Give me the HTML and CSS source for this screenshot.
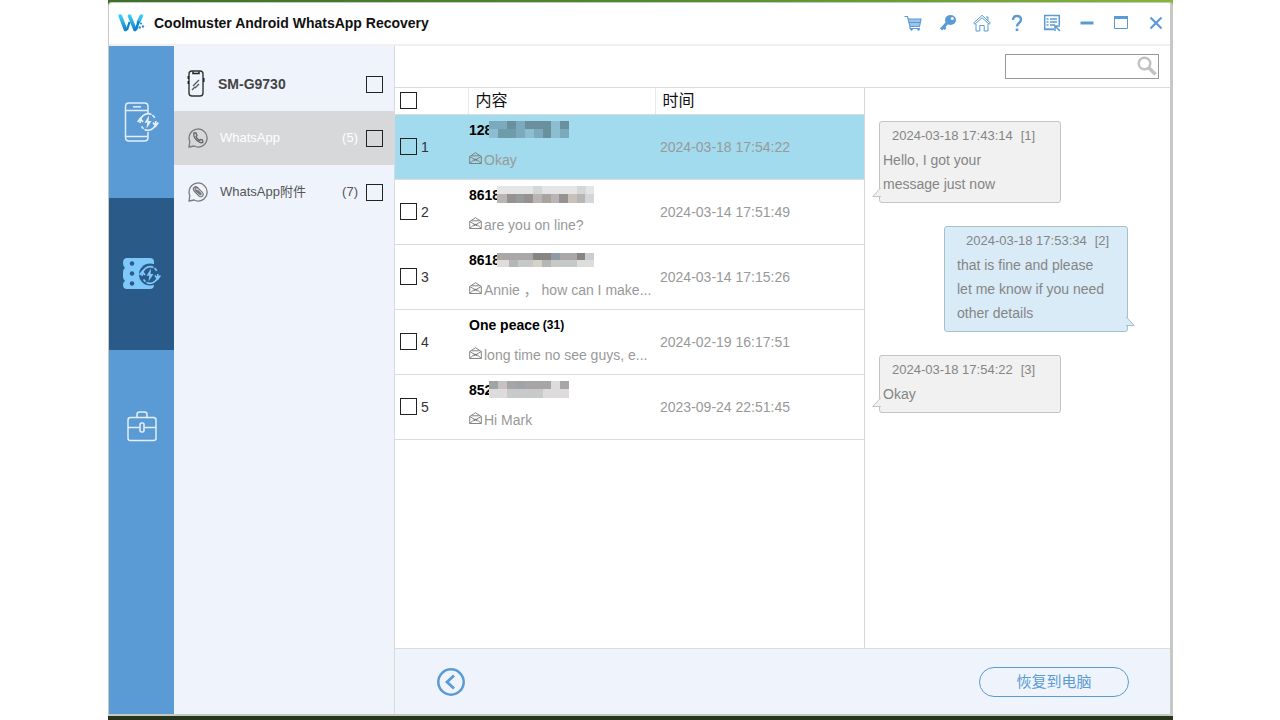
FILE: index.html
```html
<!DOCTYPE html>
<html lang="zh">
<head>
<meta charset="utf-8">
<title>Coolmuster Android WhatsApp Recovery</title>
<link rel="stylesheet" href="styles.css">
</head>
<body>
<svg class="defs" aria-hidden="true">
  <symbol id="mail" viewBox="0 0 13 12"><path d="M.7 4.500 6.500.7l5.800 3.800v7H.7zM.7 4.500 8.500 9M12.300 4.500 4.500 9M.7 11.500 4.500 8Q6.500 6.500 8.500 8l3.800 3.500M2.500 3.800h8" fill="none" stroke="#777" stroke-width=".9"/></symbol>
  <symbol id="bubble" viewBox="0 0 20 20"><path d="M1 19l.8-5.500A9 9 0 1 1 6 18z" fill="none" stroke="#777a7d" stroke-width="1.300" stroke-linejoin="round"/></symbol>
  <symbol id="cycle" viewBox="0 0 22 20"><path d="M3.300 11A8 8 0 0 1 14.500 2.500M18.700 9A8 8 0 0 1 7.500 17.500M.6 10 3.300 6.500 6 10M16 10.500l2.700 3.500 2.700-3.500M4.500 14.500l2 2.300M15.500 3 17.800 5.800" fill="none" stroke="currentColor" stroke-width="1.700"/><path d="M12 3.500 7.500 10.800h2.700L9.500 16.500l5-7.500h-2.900z" fill="currentColor"/></symbol>
</svg>
<div class="desktop">
<div class="window">
  <header class="titlebar">
    <svg class="logo" width="27" height="20" viewBox="0 0 27 20"><defs><linearGradient id="lg" x1="0" y1="0" x2="0" y2="20" gradientUnits="userSpaceOnUse"><stop offset="0" stop-color="#45dcfc"/><stop offset="1" stop-color="#0673c2"/></linearGradient></defs><g fill="none" stroke="url(#lg)" stroke-width="3.600" stroke-linecap="round"><path d="M2.300 3 7.500 16.500"/><path d="M11.500 3 17 16.500"/><path d="M23.300 3 20.500 9"/></g><path d="M20.500 8.500 18 17" stroke="#0c84cc" stroke-width="2.500"/><path d="M11.500 9 9 17" stroke="#0c84cc" stroke-width="2.200"/><g fill="#2a95d6"><circle cx="23" cy="10.500" r="1.100"/><circle cx="21.700" cy="14.500" r="1.300"/><circle cx="25" cy="13.500" r="1.200"/></g></svg>
    <h1 class="title">Coolmuster Android WhatsApp Recovery</h1>
    <div class="tools">
      <button class="tool" aria-label="Cart"><svg viewBox="0 0 18 18"><path d="M4.500 5H17L15.500 12H6z" fill="#9fc4e8"/><path d="M.5 2.500h3L6 12.500h9.500L17 5H4.500M5 8.500h11M6 12.500v2h10" fill="none" stroke="#5b9bd5" stroke-width="1.200"/><circle cx="7.500" cy="15.500" r="1.200" fill="#5b9bd5"/><circle cx="14.500" cy="15.500" r="1.200" fill="#5b9bd5"/></svg></button>
      <button class="tool" aria-label="Register"><svg viewBox="0 0 18 18"><path d="M9 8 2 15.500M4.500 13l2 2" stroke="#5b9bd5" stroke-width="3"/><ellipse cx="11.500" cy="6" rx="5.500" ry="5" fill="#5b9bd5"/><circle cx="13.300" cy="4.500" r="1.500" fill="#fff"/></svg></button>
      <button class="tool" aria-label="Home"><svg viewBox="0 0 18 18"><path d="M.7 9 9 1.300 17.300 9l-1.200 1.200L9 3.700 1.900 10.200zM3 10v7h3.800v-5.500h4.400V17H15v-7M13 3h2v3.500" fill="none" stroke="#5b9bd5"/></svg></button>
      <button class="tool" aria-label="Help"><svg viewBox="0 0 18 18"><path d="M5 6Q5 2 9 2t4 3.500Q13 7.500 11 9T9 12.500" fill="none" stroke="#5b9bd5" stroke-width="2.400"/><path d="M7.700 14.500h2.600V17H7.700z" fill="#5b9bd5"/></svg></button>
      <button class="tool" aria-label="Feedback"><svg viewBox="0 0 18 18"><path d="M11 15.300H1.700V1.500h14.600V11M3.500 5h2M3.500 8h2M3.500 11h2M7 5h7M7 8h7M7 11h5" fill="none" stroke="#5b9bd5" stroke-width="1.500"/><path d="M1 15.500h10M12 17v-5h5M12 12l5 5" fill="none" stroke="#5b9bd5" stroke-width="1.500"/></svg></button>
      <button class="tool" aria-label="Minimize"><svg viewBox="0 0 18 18"><path d="M2.500 7.500h13v3h-13z" fill="#5b9bd5"/></svg></button>
      <button class="tool" aria-label="Maximize"><svg viewBox="0 0 18 18"><path d="M2.500 3.500h13v11h-13z" fill="none" stroke="#5b9bd5"/><path d="M2 2h14v3H2z" fill="#5b9bd5"/></svg></button>
      <button class="tool" aria-label="Close"><svg viewBox="0 0 18 18"><path d="m3.500 3.500 11 11m0-11-11 11" stroke="#5b9bd5" stroke-width="2.200"/></svg></button>
    </div>
  </header>
  <div class="body">
    <nav class="rail">
      <button class="rail-item" aria-label="Recover from device"><svg width="36" height="40" viewBox="0 0 36 40"><path d="M24 11V4.500Q24 1 20.500 1H5Q1.500 1 1.500 4.500v31Q1.500 39 5 39h15.500q3.500 0 3.500-3.500V30M1.500 8.500H24M1.500 34.500H24" fill="none" stroke="#e4eef8" stroke-width="1.500"/><path d="M9 4.800h8" stroke="#e4eef8" stroke-width="1.500"/><use href="#cycle" x="13" y="10" width="22" height="20"/></svg></button>
      <button class="rail-item current" aria-label="Recover from backup"><svg width="38" height="32" viewBox="0 0 38 32"><path d="M4 0h23q4 0 4 4v23q0 4-4 4H4Q0 31 0 27q0-3 2-4-2-2-2-4v-5q0-3 2-4Q0 8 0 5q0-5 4-5z" fill="#7ec8fa"/><g fill="#2a5a88"><circle cx="9" cy="5.500" r="2.200"/><circle cx="9" cy="15.500" r="2.200"/><circle cx="9" cy="25.500" r="2.200"/><circle cx="27" cy="16.500" r="11"/></g><use href="#cycle" x="16" y="7" width="22" height="20"/></svg></button>
      <button class="rail-item" aria-label="Toolbox"><svg width="30" height="31" viewBox="0 0 30 31"><path d="M3.500 6.500h23Q29 6.500 29 9v18.500q0 2-2.500 2h-23Q1 29.500 1 27.500V9q0-2.500 2.500-2.500zM10 6V3.500Q10 1 12.500 1h5Q20 1 20 3.500V6M1 16.500h11.500M17.500 16.500H29" fill="none" stroke="#e4eef8" stroke-width="1.500"/><rect x="13" y="12" width="4" height="9" rx="1.500" fill="none" stroke="#e4eef8" stroke-width="1.600"/></svg></button>
    </nav>
    <aside class="sources">
      <label class="source device"><svg class="source-icon" viewBox="0 0 20 28"><rect x="3" y="1" width="14" height="25" rx="3" fill="none" stroke="#333" stroke-width="1.400"/><path d="M7 1.500v2h6v-2M2.300 6v3M2.300 11v3M17.800 8v4" fill="none" stroke="#222" stroke-width="1.500"/><path d="m7 16 6-6M6 20l3-3M9 18l4-4" stroke="#555" stroke-width="1.300"/></svg><span class="source-name">SM-G9730</span><input type="checkbox" class="check"></label>
      <label class="source selected"><svg class="source-icon" viewBox="0 0 20 20"><use href="#bubble"/><path d="M6 5q-1 4 3 7.500t6 1.500l-.5-2-2-.5-1 1Q8.500 10.500 8 8.500l1-1L8 5z" fill="none" stroke="#666" stroke-width="1.300"/></svg><span class="source-name">WhatsApp</span><span class="count">(5)</span><input type="checkbox" class="check"></label>
      <label class="source"><svg class="source-icon" viewBox="0 0 20 20"><use href="#bubble"/><path d="m6 9 5 5q2 1.500 3.500 0t0-3.500L9 5Q7.500 4 6 5.500T6 9M7.500 7.500l5 5M9.500 6.500 8 5.500Q6 7 8 9l4 3.500q1.500.5 1-1L9.500 8" fill="none" stroke="#777" stroke-width="1.100"/></svg><span class="source-name">WhatsApp附件</span><span class="count">(7)</span><input type="checkbox" class="check"></label>
    </aside>
    <main class="main">
      <div class="searchbar">
        <div class="search"><input class="search-input" type="text" aria-label="Search"><svg class="search-icon" viewBox="0 0 20 20"><circle cx="7.500" cy="7.500" r="5.800" fill="none" stroke="#c2c2c2" stroke-width="2.400"/><path d="m12 12 6.500 6.500" stroke="#c2c2c2" stroke-width="3.500"/></svg></div>
      </div>
      <div class="content">
        <div class="list">
          <table class="threads">
            <colgroup><col class="col-num"><col class="col-text"><col></colgroup>
            <thead><tr><th><input type="checkbox" class="check" aria-label="Select all"></th><th>内容</th><th>时间</th></tr></thead>
            <tbody>
              <tr class="active"><td><label class="pick"><input type="checkbox" class="check">1</label></td><td class="text"><div class="name">128<svg class="mask" width="80" height="17" viewBox="0 0 80 17" shape-rendering="crispEdges"><path fill="#7caabd" d="M0 0h80v17H0z"/><path fill="#6a8f9d" d="M18 0h9v8h-9zM36 0h26v8H36zM71 0h9v8h-9zM54 8h8v9h-8z"/><path fill="#8dbdd0" d="M0 8h9v9H0zM36 8h9v9h-9zM62 0h9v17h-9z"/><path fill="#709ba8" d="M9 8h18v9H9z"/></svg></div><div class="snippet"><svg class="mail"><use href="#mail"/></svg>Okay</div></td><td>2024-03-18 17:54:22</td></tr>
              <tr><td><label class="pick"><input type="checkbox" class="check">2</label></td><td class="text"><div class="name">8618<svg class="mask" width="97" height="17" viewBox="0 0 97 17" shape-rendering="crispEdges"><path fill="#e5e5e5" d="M0 0h97v8H0z"/><path fill="#b9b5b6" d="M0 8h97v9H0z"/><path fill="#d5d6d7" d="M36 0h9v8h-9zM80 0h9v8h-9zM88 8h9v9h-9z"/><path fill="#979292" d="M10 8h9v9h-9zM27 8h9v9h-9zM62 8h9v9h-9z"/><path fill="#969c9c" d="M19 8h8v9h-8z"/><path fill="#a8a39b" d="M45 8h9v9h-9z"/><path fill="#c9c0ba" d="M71 8h9v9h-9z"/></svg></div><div class="snippet"><svg class="mail"><use href="#mail"/></svg>are you on line?</div></td><td>2024-03-14 17:51:49</td></tr>
              <tr><td><label class="pick"><input type="checkbox" class="check">3</label></td><td class="text"><div class="name">8618<svg class="mask" width="97" height="14" viewBox="0 0 97 14" shape-rendering="crispEdges"><path fill="#aaa8a7" d="M0 0h97v7H0z"/><path fill="#c7c8c8" d="M0 7h97v7H0z"/><path fill="#878583" d="M36 0h18v7H36zM80 0h9v7h-9z"/><path fill="#8f9aa4" d="M54 0h9v7h-9z"/><path fill="#dfdddb" d="M0 7h12v7H0zM80 7h17v7H80z"/><path fill="#d5d2c8" d="M36 7h9v7h-9z"/><path fill="#b5b6b6" d="M12 7h9v7h-9zM45 7h9v7h-9z"/><path fill="#c9ced2" d="M88 0h9v7h-9z"/></svg></div><div class="snippet"><svg class="mail"><use href="#mail"/></svg>Annie ， how can I make...</div></td><td>2024-03-14 17:15:26</td></tr>
              <tr><td><label class="pick"><input type="checkbox" class="check">4</label></td><td class="text"><div class="name">One peace<small class="members">(31)</small></div><div class="snippet"><svg class="mail"><use href="#mail"/></svg>long time no see guys, e...</div></td><td>2024-02-19 16:17:51</td></tr>
              <tr><td><label class="pick"><input type="checkbox" class="check">5</label></td><td class="text"><div class="name">852<svg class="mask" width="80" height="17" viewBox="0 0 80 17" shape-rendering="crispEdges"><path fill="#a7a5a5" d="M0 0h80v8H0z"/><path fill="#c8c9c9" d="M0 8h80v9H0z"/><path fill="#9ea4a8" d="M0 0h9v8H0zM27 0h9v8h-9z"/><path fill="#c7c1bf" d="M9 0h9v8H9z"/><path fill="#dddbdb" d="M0 8h18v9H0zM54 8h26v9H54zM62 0h9v8h-9z"/></svg></div><div class="snippet"><svg class="mail"><use href="#mail"/></svg>Hi Mark</div></td><td>2023-09-24 22:51:45</td></tr>
            </tbody>
          </table>
        </div>
        <section class="chat">
          <article class="msg"><div class="stamp"><time>2024-03-18 17:43:14</time><span>[1]</span></div>Hello, I got your<br>message just now<svg class="tail" viewBox="0 0 9 10"><path d="M9 .5.800 9.500H9"/></svg></article>
          <article class="msg mine"><div class="stamp"><time>2024-03-18 17:53:34</time><span>[2]</span></div>that is fine and please<br>let me know if you need<br>other details<svg class="tail" viewBox="0 0 9 10"><path d="M0 .5l8.200 9H0"/></svg></article>
          <article class="msg"><div class="stamp"><time>2024-03-18 17:54:22</time><span>[3]</span></div>Okay<svg class="tail" viewBox="0 0 9 10"><path d="M9 .5.800 9.500H9"/></svg></article>
        </section>
      </div>
      <footer class="footer">
        <button class="back" aria-label="Back"><svg viewBox="0 0 28 28"><circle cx="14" cy="14" r="12.700" fill="none" stroke="#5b9bd5" stroke-width="2.500"/><path d="m17 7.500-7 6.500 7 6.500" fill="none" stroke="#5b9bd5" stroke-width="2.800"/></svg></button>
        <button class="restore">恢复到电脑</button>
      </footer>
    </main>
  </div>
</div>
</div>
</body>
</html>
```

FILE: styles.css
```css
* { box-sizing: border-box; }
body { margin: 0; background: #fff; color: #111; font: 14px/20px "Liberation Sans", "Noto Sans CJK SC", sans-serif; }
button { border: 0; padding: 0; background: none; font: inherit; cursor: pointer; }
svg { display: block; flex: none; }
.defs { position: absolute; width: 0; height: 0; }
.desktop { display: flex; min-height: 100vh; margin: 0 107px 0 108px; padding: 2px 0 4px; background: linear-gradient(90deg, #3f6e2c, #4d8a2e 50%, #86b53a) top / 100% 8px no-repeat, #26351c; }
.window { flex: 1; min-width: 0; display: flex; flex-direction: column; background: #fff; border: 1px solid #c6c8c4; border-right-width: 3px; border-bottom-width: 2px; border-radius: 4px 4px 0 0; }
.titlebar { display: flex; align-items: center; height: 43px; padding: 0 5px 2px 9px; border-bottom: 2px solid #f0f0f0; }
.title { flex: 1; margin: 0 0 0 9px; font-size: 14px; line-height: 20px; }
.tools { display: flex; justify-content: space-between; width: 261px; }
.tool, .tool svg { width: 18px; height: 18px; }
.body { flex: 1; display: grid; grid-template-columns: 65px 221px minmax(0, 1fr); }
.rail { display: flex; flex-direction: column; background: #5b9bd5; }
.rail-item { display: flex; align-items: center; justify-content: center; height: 152px; color: #e4eef8; }
.rail-item.current { background: #2a5a88; color: #7ec8fa; }
.sources { padding-top: 11px; background: #eff4fc; border-right: 1px solid #d9dadc; }
.source { display: flex; align-items: center; height: 54px; padding: 0 11px 0 14px; color: #555; font-size: 13px; }
.source-icon { width: 20px; height: 20px; }
.source-name { flex: 1; margin-left: 12px; }
.count { margin-right: 8px; }
.source.selected { background: #d7d8d9; color: #fff; }
.device { padding-left: 12px; font-size: 14px; font-weight: bold; color: #444; }
.device .source-icon { height: 28px; }
.check { appearance: none; flex: none; display: block; width: 17px; height: 17px; margin: 0; border: 1px solid #222; }
.main { display: flex; flex-direction: column; }
.searchbar { display: flex; justify-content: flex-end; height: 42px; padding: 8px 11px 0 0; border-bottom: 1px solid #dcdcdc; }
.search { position: relative; width: 154px; height: 25px; }
.search-input { width: 100%; height: 100%; padding: 0 26px 0 6px; border: 1px solid #999; background: #fff; font: inherit; }
.search-icon { position: absolute; top: 2px; right: 2px; width: 20px; height: 20px; }
.content { flex: 1; display: grid; grid-template-columns: minmax(0, 1fr) 306px; }
.threads { width: 100%; table-layout: fixed; border-collapse: collapse; }
.col-num { width: 73px; }
.col-text { width: 187px; }
.threads th { height: 26px; padding: 0 7px; border-bottom: 1px solid #dcdcdc; border-left: 1px solid #e8e8e8; font-size: 16px; font-weight: normal; text-align: left; }
.threads th:first-child { padding-left: 5px; border-left: 0; }
.threads td { height: 65px; padding: 0; border-bottom: 1px solid #dcdcdc; color: #999; white-space: nowrap; vertical-align: middle; }
.threads td:first-child { padding-left: 5px; }
.threads td:last-child { padding-left: 5px; }
.threads .text { padding: 0 0 4px 1px; }
.active { background: #a1dbed; }
.pick { display: flex; align-items: center; gap: 4px; color: #333; }
.name { display: flex; align-items: center; height: 30px; color: #000; font-weight: bold; }
.mask { margin-left: -3px; }
.members { margin-left: 3px; font-size: 12px; }
.snippet { display: flex; align-items: center; gap: 2px; height: 30px; }
.mail { width: 13px; height: 12px; margin-bottom: 4px; }
.chat { display: flex; flex-direction: column; align-items: flex-start; gap: 23px; padding: 33px 42px 20px 14px; border-left: 1px solid #d8d8d8; }
.msg { position: relative; width: 182px; padding: 2px 3px 6px; border: 1px solid #c4c4c4; border-radius: 3px; background: #f1f1f1; color: #858585; line-height: 24px; }
.mine { align-self: flex-end; width: 184px; padding-left: 12px; background: #d9ebf7; border-color: #a3c3c6; }
.stamp { display: flex; gap: 8px; padding-left: 9px; font-size: 13px; }
.tail { position: absolute; bottom: 5px; left: -8px; width: 9px; height: 10px; fill: #f1f1f1; stroke: #c4c4c4; }
.mine .tail { left: auto; right: -8px; fill: #d9ebf7; stroke: #a3c3c6; }
.footer { display: flex; align-items: center; justify-content: space-between; height: 66px; padding: 0 41px 0 42px; background: #eff4fc; border-top: 1px solid #dcdcdc; }
.back, .back svg { width: 28px; height: 28px; }
.restore { width: 150px; height: 30px; border: 1px solid #5b9bd5; border-radius: 15px; color: #5b9bd5; font-size: 15px; }
```
